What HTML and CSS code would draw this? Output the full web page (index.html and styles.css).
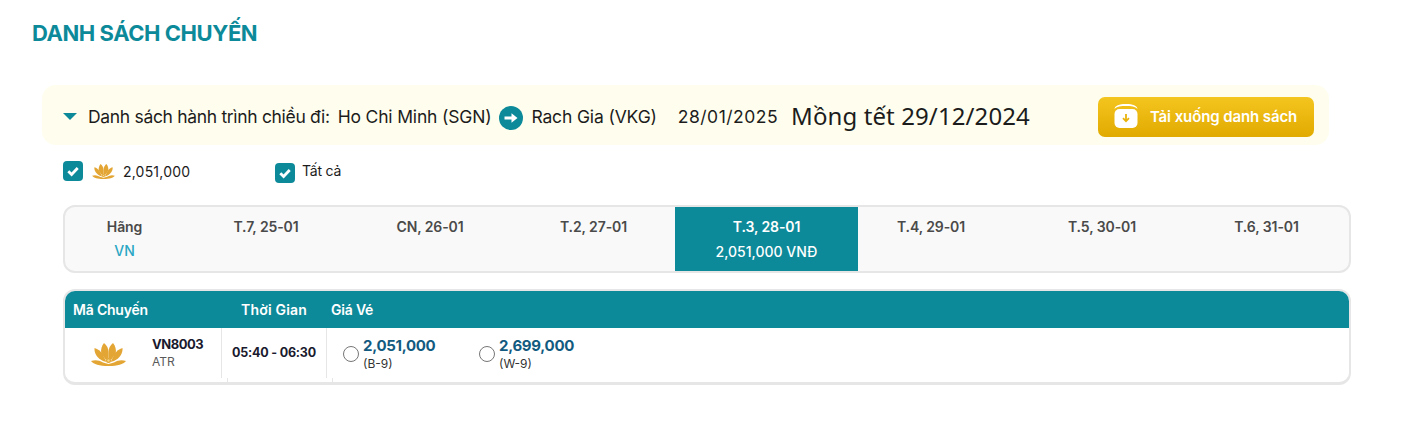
FILE: index.html
```html
<!DOCTYPE html>
<html>
  <head>
    <meta charset="utf-8">
    <title>Danh sách chuyến</title>
    <link rel="stylesheet" href="styles.css">
  </head>
  <body>
    <h1 class="page-title">DANH SÁCH CHUYẾN</h1>

    <!-- Route bar -->
    <div class="route-bar">
      <span class="caret"></span>
      <span class="route-label">Danh sách hành trình chiều đi:</span>
      <span class="route-from">Ho Chi Minh (SGN)</span>
      <svg class="route-arrow" viewBox="0 0 24 24">
        <circle cx="12" cy="12" r="12" fill="#0d8a9a"/>
        <path d="M5.500 10.400h7V7.200l6 4.800-6 4.800v-3.200h-7z" fill="#fff"/>
      </svg>
      <span class="route-to">Rach Gia (VKG)</span>
      <span class="route-date">28/01/2025</span>
      <span class="route-note">Mồng tết 29/12/2024</span>
      <button class="download-button">
        <svg class="download-icon" viewBox="0 0 24 24">
          <path d="M0.500 5C1 1.500 5 0 12 0s11 1.500 11.500 5C21.500 2.500 17 2 12 2S2.500 2.500 0.500 5z" fill="#fff"/>
          <rect x="0.500" y="5" width="23" height="19" rx="5" fill="#fff"/>
          <path d="M12 10v7M9 14.200 12 17.300l3-3.100" fill="none" stroke="#e9b30c" stroke-width="1.800"/>
        </svg>
        Tải xuống danh sách
      </button>
    </div>

    <!-- Filters -->
    <div class="filters">
      <label class="filter filter-price">
        <span class="check"><svg viewBox="0 0 20 20"><path d="M5.300 10.300 8.600 13.500 14.700 7" fill="none" stroke="#fff" stroke-width="2.800"/></svg></span>
        <svg class="lotus lotus-small" viewBox="0 0 35 23"><use href="#lotus"/></svg>
        <span class="filter-amount">2,051,000</span>
      </label>
      <label class="filter filter-all">
        <span class="check"><svg viewBox="0 0 20 20"><path d="M5.300 10.300 8.600 13.500 14.700 7" fill="none" stroke="#fff" stroke-width="2.800"/></svg></span>
        <span class="filter-text">Tất cả</span>
      </label>
    </div>

    <!-- Date tabs -->
    <div class="date-tabs">
      <div class="tab tab-airline">Hãng<span class="tab-code">VN</span></div>
      <div class="tab">T.7, 25-01</div>
      <div class="tab">CN, 26-01</div>
      <div class="tab">T.2, 27-01</div>
      <div class="tab tab-active">T.3, 28-01<span class="tab-price">2,051,000 VNĐ</span></div>
      <div class="tab tab-after-active">T.4, 29-01</div>
      <div class="tab">T.5, 30-01</div>
      <div class="tab">T.6, 31-01</div>
    </div>

    <!-- Flights -->
    <div class="flights">
      <div class="flights-head">
        <span class="head-code">Mã Chuyến</span>
        <span class="head-time">Thời Gian</span>
        <span>Giá Vé</span>
      </div>
      <div class="flight-row">
        <div class="cell-flight">
          <svg class="lotus lotus-large" viewBox="0 0 35 23"><use href="#lotus"/></svg>
          <div>
            <div class="flight-code">VN8003</div>
            <div class="flight-plane">ATR</div>
          </div>
        </div>
        <div class="cell-time">05:40 - 06:30</div>
        <div class="cell-fares">
          <label class="fare">
            <input type="radio" name="fare">
            <span class="fare-text"><b class="fare-price">2,051,000</b><span class="fare-class">(B-9)</span></span>
          </label>
          <label class="fare">
            <input type="radio" name="fare">
            <span class="fare-text"><b class="fare-price">2,699,000</b><span class="fare-class">(W-9)</span></span>
          </label>
        </div>
      </div>
      <div class="flight-foot"><span></span><span></span></div>
    </div>

    <svg class="defs" width="0" height="0">
      <symbol id="lotus" viewBox="0 0 35 23">
        <g fill="#e3a634">
          <path d="M13 0c-2.500 3-3.300 6.500-2.800 10.500L15 17l2.500-2V9C17.500 5 15.500 2 13 0z"/>
          <path d="M22 0c2.500 3 3.300 6.500 2.800 10.500L20 17l-2.500-2V9C17.500 5 19.500 2 22 0z"/>
          <path d="M3.500 5c-.5 5 2.500 10 8.500 13l3.500 1-4-8C9.500 8 7 6 3.500 5z"/>
          <path d="M31.500 5c.5 5-2.500 10-8.500 13l-3.500 1 4-8c2-3 4.500-5 8-6z"/>
          <path d="M0 18c4-1.500 8-1 12 1.500l5.500 1.500 5.500-1.500c4-2.500 8-3 12-1.500-3 3.500-8 5-17.500 5S3 21.500 0 18z"/>
          <circle cx="17.500" cy="17.500" r="2.500"/>
        </g>
        <circle cx="17.500" cy="17.500" r="1.200" fill="#f3d48a"/>
      </symbol>
    </svg>
  </body>
</html>
```

FILE: styles.css
```css
html,
body {
  margin: 0;
  background: #fff;
}

body {
  font-family: Inter, "Liberation Sans", sans-serif;
  color: #1c1c1c;
  height: 423px;
  overflow: hidden;
}

.defs {
  display: block;
}

.page-title {
  margin: 0;
  padding: 19px 0 0 32px;
  height: 85px;
  box-sizing: border-box;
  font-size: 22px;
  line-height: 28px;
  font-weight: 700;
  letter-spacing: -0.45px;
  color: #0d8a9a;
}

/* Route bar */
.route-bar {
  display: flex;
  align-items: center;
  box-sizing: border-box;
  width: 1287px;
  height: 60px;
  margin-left: 42px;
  padding: 3px 0 0 21px;
  background: #fffeee;
  border-radius: 14px;
  font-size: 17.5px;
}

.caret {
  width: 0;
  height: 0;
  margin-right: 11px;
  border-left: 7px solid transparent;
  border-right: 7px solid transparent;
  border-top: 7px solid #0d8a9a;
}

.route-label {
  letter-spacing: -0.32px;
}

.route-from {
  margin-left: 8px;
  letter-spacing: -0.17px;
}

.route-arrow {
  width: 24px;
  height: 24px;
  margin: 2px 8px 0;
}

.route-to {
  letter-spacing: -0.14px;
}

.route-date {
  margin-left: 21px;
  letter-spacing: 0.5px;
}

.route-note {
  margin: -3px 0 0 13px;
  font-family: "Noto Sans", sans-serif;
  font-size: 24px;
  letter-spacing: 0.1px;
}

.download-button {
  display: flex;
  align-items: center;
  gap: 12px;
  box-sizing: border-box;
  width: 216px;
  height: 40px;
  margin: 0 0 0 68px;
  padding: 0 0 0 16px;
  border: none;
  border-radius: 7px;
  background: linear-gradient(#f4c51f, #e1aa00);
  color: #fff;
  font-family: Inter, sans-serif;
  font-size: 15px;
  font-weight: 600;
  letter-spacing: -0.1px;
}

.download-icon {
  width: 24px;
  height: 24px;
  margin-top: -1px;
}

/* Filters */
.filters {
  display: flex;
  height: 60px;
  padding-left: 63px;
  font-size: 14px;
}

.filter {
  display: flex;
  align-items: center;
  height: 20px;
}

.filter-price {
  width: 212px;
  margin-top: 16px;
}

.filter-amount {
  letter-spacing: 0.2px;
}

.filter-all {
  margin-top: 18px;
}

.filter-text {
  margin: -6px 0 0 7px;
  letter-spacing: -0.2px;
}

.check {
  width: 20px;
  height: 20px;
  border-radius: 4px;
  background: #0d8a9a;
}

.check svg {
  display: block;
}

.lotus {
  display: block;
  flex: none;
}

.lotus-small {
  width: 23px;
  height: 15px;
  margin: 0 8px 0 9px;
}

.lotus-large {
  width: 35px;
  height: 23px;
  margin: 2px 26px 0 26px;
}

/* Date tabs */
.date-tabs {
  display: grid;
  grid-template-columns: 119px 164px 164px 163px 183px 162px 164px 165px;
  box-sizing: border-box;
  width: 1288px;
  height: 68px;
  margin-left: 63px;
  border: 2px solid #e6e6e6;
  border-radius: 12px;
  background: #f9f9f9;
  font-size: 14px;
}

.tab {
  padding-top: 11px;
  line-height: 18px;
  text-align: center;
  font-weight: 600;
  letter-spacing: -0.1px;
  color: #4a4a4a;
}

.tab-code,
.tab-price {
  display: block;
  font-weight: 500;
  letter-spacing: 0;
}

.tab-code {
  margin-top: 6px;
  color: #2aa6c4;
}

.tab-price {
  margin-top: 7px;
}

.tab-active {
  background: #0d8a9a;
  color: #fff;
}

.tab-after-active {
  padding-right: 16px;
}

/* Flights */
.flights {
  box-sizing: border-box;
  width: 1288px;
  height: 96px;
  margin: 16px 0 0 63px;
  border: 2px solid #e6e6e6;
  border-bottom-width: 3px;
  border-radius: 12px;
  overflow: hidden;
}

.flights-head {
  display: flex;
  align-items: center;
  height: 37px;
  padding-left: 8px;
  background: #0d8a9a;
  color: #fff;
  font-size: 14px;
  font-weight: 600;
  letter-spacing: -0.2px;
}

.head-code {
  width: 168px;
}

.head-time {
  width: 90px;
  letter-spacing: 0.2px;
}

.flight-row {
  display: flex;
  height: 50px;
}

.cell-flight {
  display: flex;
  align-items: center;
  box-sizing: border-box;
  width: 157px;
  border-right: 1px solid #e6e6e6;
}

.flight-code {
  font-size: 13px;
  line-height: 18px;
  font-weight: 700;
  letter-spacing: -0.45px;
  color: #1a1a2e;
}

.flight-plane {
  font-size: 12px;
  line-height: 18px;
  color: #5a5a5a;
}

.cell-time {
  box-sizing: border-box;
  width: 105px;
  border-right: 1px solid #e6e6e6;
  line-height: 50px;
  text-align: center;
  font-size: 12.5px;
  font-weight: 700;
  letter-spacing: -0.2px;
  color: #1a1a2e;
}

.cell-fares {
  display: flex;
  padding-left: 16px;
}

.fare {
  display: flex;
  align-items: center;
  width: 136px;
}

.fare input {
  flex: none;
  width: 16px;
  height: 16px;
  margin: 2px 4px 0 0;
}

.fare-text {
  padding-top: 4px;
}

.fare-price {
  display: block;
  font-size: 15px;
  line-height: 18px;
  font-weight: 700;
  letter-spacing: -0.3px;
  color: #125a80;
}

.fare-class {
  display: block;
  font-size: 12px;
  line-height: 18px;
  color: #333;
}

.flight-foot {
  display: flex;
  height: 4px;
  padding-left: 162px;
}

.flight-foot span {
  width: 104px;
  height: 4px;
  border-left: 1px solid #e6e6e6;
}
```
